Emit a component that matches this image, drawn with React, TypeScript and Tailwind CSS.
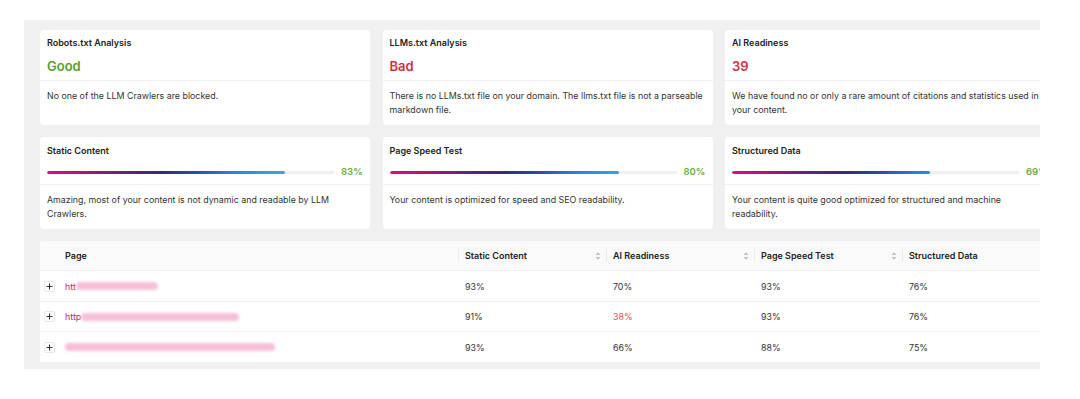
import React from "react";

const font = { fontFamily: "Inter, 'Noto Sans', sans-serif" };

const GRADIENT =
  "linear-gradient(to right, #e8097b 0%, #b0127e 12%, #6a1f80 26%, #352a7c 40%, #2a4da8 52%, #2b7fd8 64%, #2f97e0 74%, #3eabcb 84%, #55bfae 100%)";

function StatCard({ title, value, color, lines }: { title: string; value: string; color: string; lines: string[] }) {
  return (
    <div className="bg-white rounded-[4px] flex flex-col">
      <div className="pt-[6px] pb-[4px] px-[7px] border-b border-[#f0f0f0]">
        <div className="text-[9px] leading-[14px] font-semibold text-[#222]">{title}</div>
        <div className={`mt-[6px] text-[13px] leading-[20px] font-semibold ${color}`}>{value}</div>
      </div>
      <div className="pt-[8px] pb-[8px] px-[7px] text-[8.85px] leading-[14px] text-[#333]">
        {lines.map((l, i) => (
          <div key={i} className="whitespace-nowrap">{l}</div>
        ))}
      </div>
    </div>
  );
}

function BarCard({ title, pct, lines }: { title: string; pct: number; lines: string[] }) {
  return (
    <div className="bg-white rounded-[4px] flex flex-col">
      <div className="pt-[7px] pb-[5px] pl-[7px] pr-[8px] border-b border-[#f0f0f0]">
        <div className="text-[9px] leading-[14px] font-semibold text-[#222]">{title}</div>
        <div className="mt-[7px] h-[14px] flex items-center gap-[7px]">
          <div className="flex-1 h-[3px] rounded-full bg-[#efefef] overflow-hidden">
            <div
              className="h-full rounded-full"
              style={{ width: `${pct}%`, backgroundImage: GRADIENT, backgroundSize: `${(100 / pct) * 100}% 100%` }}
            />
          </div>
          <div className="w-[21px] text-right text-[9.5px] font-semibold text-[#6aae3c]">{pct}%</div>
        </div>
      </div>
      <div className="pt-[8px] pb-[8px] px-[7px] text-[8.85px] leading-[14px] text-[#333]">
        {lines.map((l, i) => (
          <div key={i} className="whitespace-nowrap">{l}</div>
        ))}
      </div>
    </div>
  );
}

function SortIcon() {
  return (
    <svg width="6" height="10" viewBox="0 0 6 10" className="shrink-0">
      <path d="M3 1 L5.5 4 H0.5 Z" fill="#c4c4c4" />
      <path d="M3 9 L5.5 6 H0.5 Z" fill="#c4c4c4" />
    </svg>
  );
}

function HeaderCell({ label, sort }: { label: string; sort?: boolean }) {
  return (
    <div className="h-[29px] flex items-center">
      <div className="w-px h-[13px] bg-[#ebebeb] shrink-0" />
      <div className="ml-[6px] flex-1 text-[9px] font-semibold text-[#222]">{label}</div>
      {sort && <div className="mr-[5px]"><SortIcon /></div>}
    </div>
  );
}

function Blur({ w }: { w: number }) {
  return (
    <span
      className="inline-block h-[8px] bg-[#f5bfd7] blur-[1.5px] rounded-sm align-middle"
      style={{ width: w }}
    />
  );
}

function PlusBox() {
  return (
    <div className="ml-[4px] w-[11px] h-[11px] border border-[#e8e8e8] rounded-[2px] flex items-center justify-center bg-white">
      <svg width="7" height="7" viewBox="0 0 7 7">
        <path d="M3.5 0.5 V6.5 M0.5 3.5 H6.5" stroke="#333" strokeWidth="1" />
      </svg>
    </div>
  );
}

const rows = [
  { prefix: "htt", blur: 82, v: ["93%", "70%", "93%", "76%"], red: false },
  { prefix: "http", blur: 158, v: ["91%", "38%", "93%", "76%"], red: true },
  { prefix: "", blur: 210, v: ["93%", "66%", "88%", "75%"], red: false },
];

export default function App() {
  return (
    <div className="w-[1080px] h-[399px] bg-white pt-[20px] pl-[24px]" style={font}>
      <div className="w-[1016px] h-[349px] bg-[#f0f0f0] overflow-hidden pt-[10px] pl-[16px]">
        <div className="w-[1015px] flex flex-col gap-[12px]">
          <div className="grid grid-cols-3 gap-x-[12.5px]">
            <StatCard title="Robots.txt Analysis" value="Good" color="text-[#55a02c]" lines={["No one of the LLM Crawlers are blocked."]} />
            <StatCard
              title="LLMs.txt Analysis"
              value="Bad"
              color="text-[#d3303f]"
              lines={["There is no LLMs.txt file on your domain. The llms.txt file is not a parseable", "markdown file."]}
            />
            <StatCard
              title="AI Readiness"
              value="39"
              color="text-[#d3303f]"
              lines={["We have found no or only a rare amount of citations and statistics used in", "your content."]}
            />
          </div>
          <div className="grid grid-cols-3 gap-x-[12.5px]">
            <BarCard title="Static Content" pct={83} lines={["Amazing, most of your content is not dynamic and readable by LLM", "Crawlers."]} />
            <BarCard title="Page Speed Test" pct={80} lines={["Your content is optimized for speed and SEO readability."]} />
            <BarCard title="Structured Data" pct={69} lines={["Your content is quite good optimized for structured and machine", "readability."]} />
          </div>
          <div className="bg-white rounded-t-[4px]">
            <div className="grid grid-cols-[17px_401px_148px_148px_148px_148px] bg-[#fafafa] border-b border-[#f0f0f0] rounded-t-[4px]">
              <div />
              <div className="h-[29px] flex items-center pl-[8px] text-[9px] font-semibold text-[#222]">Page</div>
              <HeaderCell label="Static Content" sort />
              <HeaderCell label="AI Readiness" sort />
              <HeaderCell label="Page Speed Test" sort />
              <HeaderCell label="Structured Data" />
            </div>
            {rows.map((r, i) => (
              <div key={i} className="grid grid-cols-[17px_401px_148px_148px_148px_148px] border-b border-[#f0f0f0] h-[30.5px] pt-[1px] items-center text-[8.85px] text-[#333]">
                <PlusBox />
                <div className="pl-[8px] flex items-center text-[#c8246f]">
                  {r.prefix && <span>{r.prefix}</span>}
                  <Blur w={r.blur} />
                </div>
                <div className="pl-[7px]">{r.v[0]}</div>
                <div className={`pl-[7px] ${r.red ? "text-[#e0525e]" : ""}`}>{r.v[1]}</div>
                <div className="pl-[7px]">{r.v[2]}</div>
                <div className="pl-[7px]">{r.v[3]}</div>
              </div>
            ))}
          </div>
        </div>
      </div>
    </div>
  );
}
